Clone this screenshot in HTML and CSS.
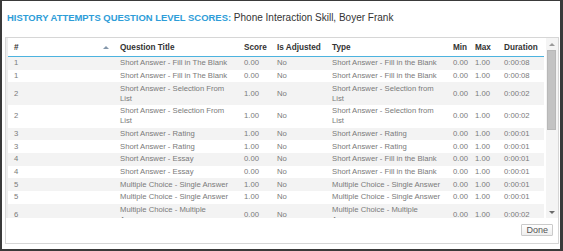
FILE: index.html
```html
<!DOCTYPE html>
<html>
<head>
<meta charset="utf-8">
<link rel="stylesheet" href="styles.css">
</head>
<body>
<div class="dialog">
  <h1 class="title"><span class="title-key">HISTORY ATTEMPTS QUESTION LEVEL SCORES:</span> Phone Interaction Skill, Boyer Frank</h1>
  <div class="panel">
    <div class="grid">
      <div class="grid-body">
        <table class="scores">
          <colgroup>
            <col class="c-num"><col class="c-title"><col class="c-score"><col class="c-adj"><col class="c-type"><col class="c-min"><col class="c-max"><col class="c-dur">
          </colgroup>
          <thead>
            <tr>
              <th><div class="th-sort"><span>#</span><span class="sort-up"></span></div></th>
              <th>Question Title</th>
              <th>Score</th>
              <th>Is Adjusted</th>
              <th>Type</th>
              <th>Min</th>
              <th>Max</th>
              <th>Duration</th>
            </tr>
          </thead>
          <tbody>
            <tr><td>1</td><td>Short Answer - Fill in The Blank</td><td>0.00</td><td>No</td><td>Short Answer - Fill in the Blank</td><td>0.00</td><td>1.00</td><td>0:00:08</td></tr>
            <tr><td>1</td><td>Short Answer - Fill in The Blank</td><td>0.00</td><td>No</td><td>Short Answer - Fill in the Blank</td><td>0.00</td><td>1.00</td><td>0:00:08</td></tr>
            <tr><td>2</td><td>Short Answer - Selection From List</td><td>1.00</td><td>No</td><td>Short Answer - Selection from List</td><td>0.00</td><td>1.00</td><td>0:00:02</td></tr>
            <tr><td>2</td><td>Short Answer - Selection From List</td><td>1.00</td><td>No</td><td>Short Answer - Selection from List</td><td>0.00</td><td>1.00</td><td>0:00:02</td></tr>
            <tr><td>3</td><td>Short Answer - Rating</td><td>1.00</td><td>No</td><td>Short Answer - Rating</td><td>0.00</td><td>1.00</td><td>0:00:01</td></tr>
            <tr><td>3</td><td>Short Answer - Rating</td><td>1.00</td><td>No</td><td>Short Answer - Rating</td><td>0.00</td><td>1.00</td><td>0:00:01</td></tr>
            <tr><td>4</td><td>Short Answer - Essay</td><td>0.00</td><td>No</td><td>Short Answer - Fill in the Blank</td><td>0.00</td><td>1.00</td><td>0:00:01</td></tr>
            <tr><td>4</td><td>Short Answer - Essay</td><td>0.00</td><td>No</td><td>Short Answer - Fill in the Blank</td><td>0.00</td><td>1.00</td><td>0:00:01</td></tr>
            <tr><td>5</td><td>Multiple Choice - Single Answer</td><td>1.00</td><td>No</td><td>Multiple Choice - Single Answer</td><td>0.00</td><td>1.00</td><td>0:00:01</td></tr>
            <tr><td>5</td><td>Multiple Choice - Single Answer</td><td>1.00</td><td>No</td><td>Multiple Choice - Single Answer</td><td>0.00</td><td>1.00</td><td>0:00:01</td></tr>
            <tr><td>6</td><td>Multiple Choice - Multiple Answer</td><td>0.00</td><td>No</td><td>Multiple Choice - Multiple Answer</td><td>0.00</td><td>1.00</td><td>0:00:02</td></tr>
          </tbody>
        </table>
      </div>
      <div class="scrollbar">
        <div class="sb-btn"><span class="arrow-up"></span></div>
        <div class="sb-track"><div class="sb-thumb"></div></div>
        <div class="sb-btn"><span class="arrow-down"></span></div>
      </div>
    </div>
    <div class="footer"><button class="btn">Done</button></div>
  </div>
</div>
</body>
</html>
```
FILE: styles.css
```css
html, body {
  margin: 0;
  padding: 0;
  background: #ffffff;
}
.dialog {
  width: 563px;
  height: 251px;
  box-sizing: border-box;
  border-style: solid;
  border-color: #3a3a3a;
  border-width: 1px 3px 2px 2px;
  padding: 11px 1px 5px 3px;
  font-family: "Liberation Sans", Arial, sans-serif;
  display: flex;
  flex-direction: column;
  background: #ffffff;
}
.title {
  margin: 0 0 13px 2px;
  font-size: 10px;
  line-height: 12px;
  font-weight: normal;
  color: #333333;
  white-space: nowrap;
}
.title-key {
  font-weight: bold;
  font-size: 9.45px;
  color: #2e9dd8;
}
.panel {
  flex: 1;
  border: 1px solid #d6d6d6;
  display: flex;
  flex-direction: column;
  min-height: 0;
}
.grid {
  display: flex;
  height: 180px;
  border-left: 2px solid #ededed;
}
.grid-body {
  flex: 1;
  overflow: hidden;
  padding-right: 2px;
}
.scores {
  width: 536px;
  border-collapse: collapse;
  table-layout: fixed;
  font-size: 7.7px;
}
.c-num { width: 106px; }
.c-title { width: 124px; }
.c-score { width: 33px; }
.c-adj { width: 55px; }
.c-type { width: 121px; }
.c-min { width: 22px; }
.c-max { width: 29px; }
.c-dur { width: 46px; }
.scores th {
  text-align: left;
  font-weight: bold;
  font-size: 8.2px;
  color: #333333;
  padding: 4px 0 3px 6px;
  line-height: 10px;
  height: 11px;
  border-bottom: 1px solid #4db3df;
  white-space: nowrap;
}
.th-sort {
  display: flex;
  justify-content: space-between;
  align-items: center;
  padding-right: 5px;
}
.sort-up {
  width: 0;
  height: 0;
  border-left: 3px solid transparent;
  border-right: 3px solid transparent;
  border-bottom: 3px solid #8497ab;
}
.scores td {
  padding: 1.33px 5px 1.33px 6px;
  line-height: 10px;
  color: #7a7a7a;
  vertical-align: middle;
}
.scores tbody tr:nth-child(odd) td {
  background: #f3f3f3;
}
.scrollbar {
  width: 12px;
  display: flex;
  flex-direction: column;
  background: #f4f4f4;
}
.sb-btn {
  height: 12px;
  display: flex;
  align-items: center;
  justify-content: center;
}
.arrow-up {
  width: 0;
  height: 0;
  border-left: 3px solid transparent;
  border-right: 3px solid transparent;
  border-bottom: 3px solid #9a9a9a;
}
.arrow-down {
  width: 0;
  height: 0;
  border-left: 3px solid transparent;
  border-right: 3px solid transparent;
  border-top: 3px solid #6a6a6a;
}
.sb-track {
  flex: 1;
  padding: 0 2px 0 1px;
}
.sb-thumb {
  height: 80px;
  box-sizing: border-box;
  background: #c3c3c3;
  border: 1px solid #b8b8b8;
}
.footer {
  flex: 1;
  display: flex;
  justify-content: flex-end;
  align-items: flex-start;
  padding: 6px 5px 0 0;
  background: #ffffff;
}
.btn {
  font-family: "Liberation Sans", Arial, sans-serif;
  font-size: 9px;
  line-height: 10px;
  color: #555555;
  border: 1px solid #cacaca;
  border-radius: 1px;
  background: linear-gradient(#ffffff, #eeeeee);
  padding: 0 4px;
  margin: 0;
}
```
